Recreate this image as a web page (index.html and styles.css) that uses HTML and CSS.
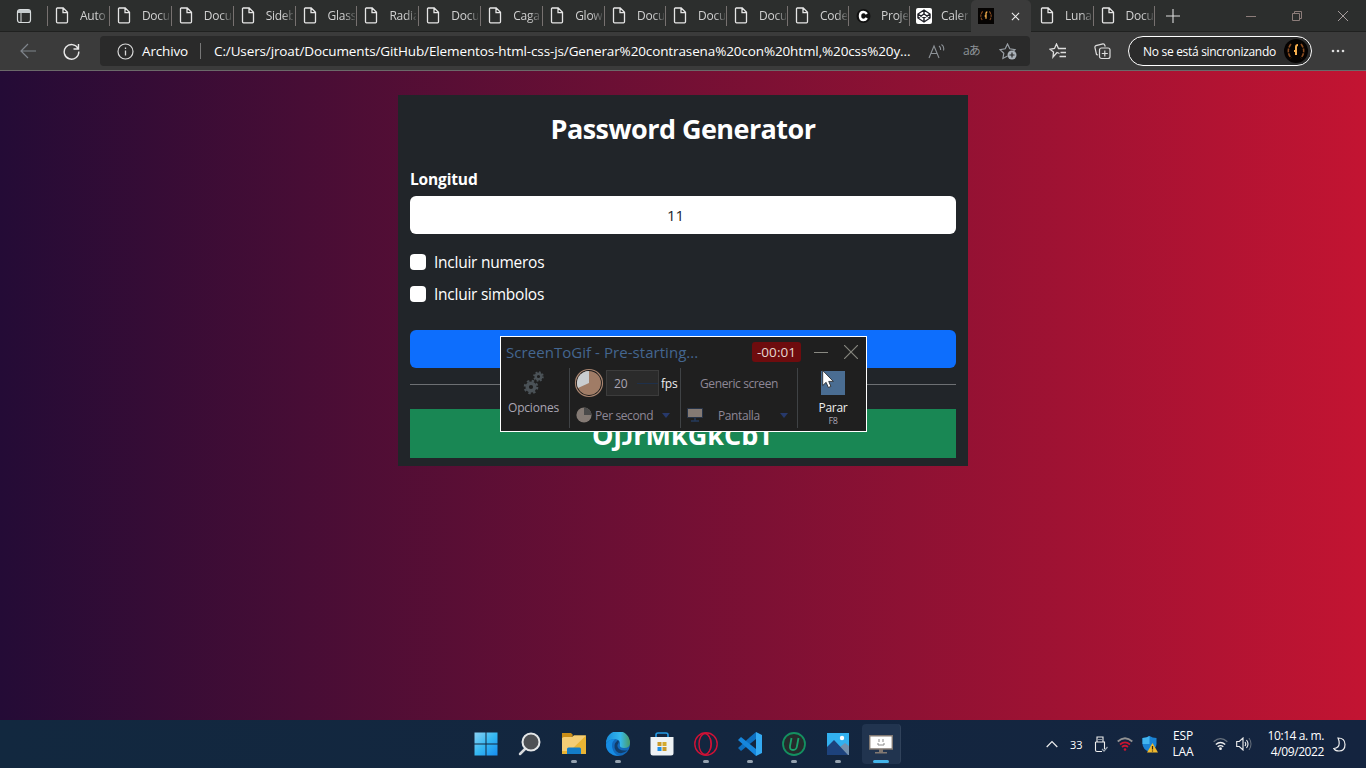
FILE: index.html
```html
<!DOCTYPE html>
<html lang="es">
<head>
<meta charset="utf-8">
<title>Password Generator</title>
<link rel="stylesheet" href="styles.css">
</head>
<body>
<svg class="defs" aria-hidden="true">
  <symbol id="doc" viewBox="0 0 14 17"><path d="M1.800 1h6.400l4.300 4.300v9.500q0 1-1 1H2.500q-1 0-1-1V1.800q0-.8.8-.8zM8 1v4.600h4.500" fill="none" stroke="#e6e6e6" stroke-width="1.300"/></symbol>
  <symbol id="emblem" viewBox="0 0 24 24"><rect width="24" height="24" fill="#050302"/><g fill="none" stroke="#8c4d20" stroke-width="1.600"><path d="M7 5Q1.500 12 7 19M17 5q5.500 7 0 14" stroke-dasharray="4 1"/><path d="M12 16V8q0-2 2-2M10 12H12" stroke="#f5ae4c" stroke-width="2"/></g></symbol>
</svg>
<div class="desktop">
  <header class="tabs">
    <div class="workspace"><svg width="16" height="16" viewBox="0 0 16 16"><rect x="1.500" y="1.500" width="13" height="13" rx="2.500" fill="none" stroke="#d8dcdd" stroke-width="1.200"/><path d="M2 2h12v3H2z" fill="#c5cbcd"/><path d="M5 5v9" stroke="#d8dcdd"/></svg></div>
    <div class="tab wide"><svg class="doc"><use href="#doc"/></svg><span>Auto</span></div>
    <div class="tab wide"><svg class="doc"><use href="#doc"/></svg><span>Docu</span></div>
    <div class="tab wide"><svg class="doc"><use href="#doc"/></svg><span>Docu</span></div>
    <div class="tab wide"><svg class="doc"><use href="#doc"/></svg><span>Sideb</span></div>
    <div class="tab wide"><svg class="doc"><use href="#doc"/></svg><span>Glass</span></div>
    <div class="tab wide"><svg class="doc"><use href="#doc"/></svg><span>Radia</span></div>
    <div class="tab wide"><svg class="doc"><use href="#doc"/></svg><span>Docu</span></div>
    <div class="tab wide"><svg class="doc"><use href="#doc"/></svg><span>Caga</span></div>
    <div class="tab wide"><svg class="doc"><use href="#doc"/></svg><span>Glow</span></div>
    <div class="tab"><svg class="doc"><use href="#doc"/></svg><span>Docu</span></div>
    <div class="tab"><svg class="doc"><use href="#doc"/></svg><span>Docu</span></div>
    <div class="tab"><svg class="doc"><use href="#doc"/></svg><span>Docu</span></div>
    <div class="tab"><svg class="doc"><use href="#doc"/></svg><span>Code</span></div>
    <div class="tab"><svg class="fav" viewBox="0 0 16 16"><circle cx="7.500" cy="8" r="7" fill="#111"/><path d="M10.800 6Q9.500 4 7.500 4q-3.500 0-3.500 4t3.500 4q2 0 3.300-2" fill="none" stroke="#fff" stroke-width="2.500"/></svg><span>Proje</span></div>
    <div class="tab last"><svg class="fav" viewBox="0 0 16 16"><rect width="16" height="16" rx="2" fill="#fff"/><path d="M8 2l6 4v4l-6 4-6-4V6zM2 6l6 4 6-4M2 10l6-4 6 4M8 2v4M8 10v4" fill="none" stroke="#1e1f26" stroke-width="1.400"/></svg><span>Calen</span></div>
    <div class="tab active"><svg class="fav"><use href="#emblem"/></svg><svg class="close" viewBox="0 0 10 10"><path d="M1 1l8 8M9 1L1 9" stroke="#eee" stroke-width="1.200"/></svg></div>
    <div class="tab"><svg class="doc"><use href="#doc"/></svg><span>Luna</span></div>
    <div class="tab"><svg class="doc"><use href="#doc"/></svg><span>Docu</span></div>
    <svg class="newtab" viewBox="0 0 14 14"><path d="M7 0v14M0 7h14" stroke="#dcdcdc" stroke-width="1.100"/></svg>
    <div class="winctl">
      <svg width="12" height="12"><path d="M1 6.500h10" stroke="#8d7d7a"/></svg>
      <svg width="12" height="12"><path d="M1.500 3.500h7v7h-7zM3.500 3V1.500h7v7H9" fill="none" stroke="#8d7d7a"/></svg>
      <svg width="12" height="12"><path d="M1 1l10 10M11 1L1 11" stroke="#a59c9c"/></svg>
    </div>
  </header>
  <nav class="toolbar">
    <svg class="back" viewBox="0 0 17 16"><path d="M16 8H1M8 1L1 8l7 7" fill="none" stroke="#7f858c" stroke-width="1.200"/></svg>
    <svg class="reload" viewBox="0 0 17 17"><path d="M15 5.500A7.300 7.300 0 1 0 15.800 8.500M15.500 1v5h-5" fill="none" stroke="#e8e8e8" stroke-width="1.400"/></svg>
    <div class="address">
      <svg class="info" viewBox="0 0 17 17"><circle cx="8.500" cy="8.500" r="7.500" fill="none" stroke="#d8d8d8" stroke-width="1.200"/><path d="M8.500 7.500v5M8.500 4.500v1.500" stroke="#d8d8d8" stroke-width="1.300"/></svg>
      <span class="scheme">Archivo</span>
      <span class="bar"></span>
      <span class="url">C:/Users/jroat/Documents/GitHub/Elementos-html-css-js/Generar%20contrasena%20con%20html,%20css%20y...</span>
      <svg class="read" viewBox="0 0 17 15"><path d="M1 14L6 2l5 12M3 9.500h6M11 2q2 1.500 1.500 4M13.500.5q3 2 2 6" fill="none" stroke="#8d9297" stroke-width="1.100"/></svg>
      <span class="translate">aあ</span>
      <svg class="star" viewBox="0 0 18 17"><path d="M8.500 13l-4.600 2.500.9-5.200L1 6.600l5.200-.8L8.500 1l2.300 4.800 5.200.8-2 2" fill="none" stroke="#999fa5" stroke-width="1.200"/><circle cx="13" cy="12" r="4.500" fill="#aab1b8"/><path d="M13 9.500v5M10.500 12h5" stroke="#2a2a2a" stroke-width="1.200"/></svg>
    </div>
    <svg class="favs" viewBox="0 0 18 16"><path d="M10.500 10.500L8 9.500l-4 4.500.5-5L1 6.300l4.500-.8L7.500 1l2 4.500H17M11.500 9.500H17M10.500 13.500H17" fill="none" stroke="#ddd" stroke-width="1.300"/></svg>
    <svg class="coll" viewBox="0 0 17 17"><path d="M4 12l-1.500-.5L.9 4.500q-.2-1.500 1-1.900l7-1.700q1.500-.2 2 1.600l.3 1.200" fill="none" stroke="#ddd" stroke-width="1.200"/><rect x="5.500" y="5" width="10.500" height="10.500" rx="2" fill="none" stroke="#ddd" stroke-width="1.200"/><path d="M10.800 7.500v6M7.800 10.500h6" stroke="#ddd" stroke-width="1.200"/></svg>
    <div class="profile"><span>No se está sincronizando</span><svg class="avatar"><use href="#emblem"/></svg></div>
    <svg class="dots" viewBox="0 0 14 4"><g fill="#ddd"><circle cx="2" cy="2" r="1.300"/><circle cx="7" cy="2" r="1.300"/><circle cx="12" cy="2" r="1.300"/></g></svg>
  </nav>
  <main class="page">
    <section class="card">
      <h1>Password Generator</h1>
      <div class="label">Longitud</div>
      <div class="input">11</div>
      <div class="check"><i></i><span>Incluir numeros</span></div>
      <div class="check"><i></i><span>Incluir simbolos</span></div>
      <div class="button"></div>
      <div class="rule"></div>
      <div class="result">Oj<span class="cap">J</span>rMkGkCbT</div>
    </section>
    <aside class="recorder">
      <div class="rtitle"><span>ScreenToGif - Pre-starting...</span><b>-00:01</b>
        <svg width="14" height="14" viewBox="0 0 14 14"><path d="M0 7.500h14" stroke="#898982"/></svg>
        <svg width="14" height="14" viewBox="0 0 14 14"><path d="M0 0l14 14M14 0L0 14" stroke="#85857e" stroke-width="1.200"/></svg></div>
      <div class="rbody">
        <div class="opt">
          <svg width="22" height="24" viewBox="0 0 22 24"><g fill="none" stroke="#4b5257"><circle cx="8" cy="16" r="3.800" stroke-width="3.400"/><circle cx="8" cy="16" r="6.200" stroke-width="2.200" stroke-dasharray="2.435 2.435"/><circle cx="15.500" cy="5.500" r="2.800" stroke-width="2.400"/><circle cx="15.500" cy="5.500" r="4.400" stroke-width="1.800" stroke-dasharray="1.728 1.728"/></g></svg>
          <span>Opciones</span>
        </div>
        <div class="rate">
          <div class="row r1"><svg width="30" height="30" viewBox="0 0 30 30"><circle cx="15" cy="15" r="13.500" fill="#181818" stroke="#a98570" stroke-width="1.200"/><circle cx="15" cy="15" r="12" fill="#a07c66"/><path d="M15 15V3A12 12 0 0 0 4 20z" fill="#c9cdd0"/></svg><span class="num">20<em></em></span><span class="fps">fps</span></div>
          <div class="row r2"><svg width="16" height="16" viewBox="0 0 16 16"><circle cx="8" cy="8" r="7.600" fill="#847a74"/><path d="M8 8V.4A7.600 7.600 0 0 1 15.600 8z" fill="#4a4a4a"/></svg><span class="ps">Per second</span><svg class="arrow" width="8" height="5"><path d="M0 0h8L4 5z" fill="#27396b"/></svg></div>
        </div>
        <div class="screen">
          <div class="row r1"><span>Generic screen</span></div>
          <div class="row r2"><svg width="16" height="14" viewBox="0 0 16 14"><path d="M.5.500h15v9H.5z" fill="#847a74" stroke="#263347"/><path d="M8 10v3M4 13h8" stroke="#263b5c" stroke-width="1.500"/></svg><span class="pan">Pantalla</span><svg class="arrow" width="8" height="5"><path d="M0 0h8L4 5z" fill="#27396b"/></svg></div>
        </div>
        <div class="stop"><i></i><span>Parar</span><small>F8</small></div>
      </div>
      <svg class="cursor" viewBox="0 0 12 19"><path d="M.7 1v15l3.400-3.200L6.400 18l2.500-1.100-2.200-5h4.600z" fill="#fff" stroke="#222" stroke-width=".8"/></svg>
    </aside>
  </main>
  <footer class="taskbar">
    <div class="apps">
      <div class="app"><svg viewBox="0 0 24 24"><defs><linearGradient id="w" x2="1" y2="1"><stop stop-color="#8ad0f2"/><stop offset=".5" stop-color="#35b8f2"/><stop offset="1" stop-color="#168cf0"/></linearGradient></defs><path d="M.5.500H11.500V11.500H.5zM12.500.500h11v11h-11zM.5 12.500h11v11H.5zM12.500 12.500h11v11h-11z" fill="url(#w)"/></svg></div>
      <div class="app"><svg viewBox="0 0 24 24"><path d="M8 16l-6 6" stroke="#d6d9dc" stroke-width="2.500" stroke-linecap="round"/><circle cx="13" cy="10" r="8.500" fill="#4d5054" stroke="#e4e7e8" stroke-width="2"/></svg></div>
      <div class="app run"><svg viewBox="0 0 24 24"><path d="M0 1h9l2 2-2 3H0z" fill="#c98d17"/><path d="M0 6l2-1h8l2-1.500h12V22H0z" fill="#e9b434"/><path d="M0 6l2-1h8l2-1.500h12L8 19H0z" fill="#f4cd75"/><path d="M5 22v-5q0-1.500 1.500-1.500h11q1.500 0 1.500 1.500v5z" fill="#137dc8"/></svg></div>
      <div class="app run"><svg viewBox="0 0 24 24"><defs><linearGradient id="e" x2="1"><stop stop-color="#168bdb"/><stop offset=".6" stop-color="#35b8ec"/><stop offset="1" stop-color="#4c9b63"/></linearGradient></defs><circle cx="12" cy="12" r="12" fill="#1269bb"/><path d="M0 11A12 12 0 0 1 24 11q0 5-6 5-5 0-4-4 .5-4-5-5-5 0-9 4z" fill="url(#e)"/><path d="M12 8q-6 5-2 11 5 5 12-1-5 1.500-9-1-3-3-.5-6 1-1.500-.5-3z" fill="#123e6b"/><path d="M0 12q3-5 9-5-5 5-2 11 1.500 4 6 6Q0 23 0 12z" fill="#168ce3"/></svg></div>
      <div class="app"><svg viewBox="0 0 24 24"><path d="M6 6V3q0-2 2-2h8q2 0 2 2v3" fill="none" stroke="#249ae5" stroke-width="1.600"/><path d="M.5 5h23v16q0 2.500-2.500 2.500H3Q.5 23.500.5 21z" fill="#eef2f5"/><path d="M7.500 10h4v4h-4zM12.500 15h4v4h-4z" fill="#c9992a"/><path d="M12.500 10h4v4h-4z" fill="#d5aa2e"/><path d="M7.500 15h4v4h-4z" fill="#1d8fe8"/></svg></div>
      <div class="app run"><svg viewBox="0 0 24 24"><g fill="none" stroke="#d01236" stroke-width="1.400"><circle cx="12" cy="12" r="11.200"/><ellipse cx="11" cy="12" rx="6" ry="10.500"/><path d="M14.500 4q3 2 3 8t-3 8" stroke-width="1"/></g></svg></div>
      <div class="app run"><svg viewBox="0 0 24 24"><path d="M18 0l-6 5L0 16l3 3L18 7z" fill="#0d6fc0"/><path d="M18 24L0 8l3-3 15 12z" fill="#1686dc"/><path d="M18 0l6 3v18l-6 3z" fill="#34aaf2"/></svg></div>
      <div class="app run"><svg viewBox="0 0 24 24"><circle cx="12" cy="12" r="11" fill="#252b2c" stroke="#149061" stroke-width="1.800"/><path d="M9.500 6L8 14q-.5 4 3 4t4-4l1.500-8" fill="none" stroke="#19a26b" stroke-width="1.800"/></svg></div>
      <div class="app run"><svg viewBox="0 0 24 24"><path d="M1 1h22v22H1z" fill="#32b0ef"/><path d="M14 15l5-4 4 3v9H14z" fill="#7390ad"/><path d="M1 15l7-7 14 15H1z" fill="#1d427c"/><circle cx="16" cy="6" r="2.200" fill="#fff"/></svg></div>
      <div class="app run current"><svg viewBox="0 0 24 24"><path d="M.7 3.700h22.600v13.300H.7z" fill="#fff" stroke="#817872" stroke-width="1.400"/><path d="M10 17h4v3h4v1.500H6V20h4z" fill="#817872"/><path d="M10 7v3M14 7v3M9 11v2h6v-2" fill="none" stroke="#8a8a8a"/></svg></div>
    </div>
    <div class="tray">
      <svg class="up" viewBox="0 0 12 8"><path d="M.7 7L6 1.500 11.300 7" fill="none" stroke="#eee" stroke-width="1.200"/></svg>
      <span class="temp">33</span>
      <svg class="usb" viewBox="0 0 14 17"><path d="M3 6V1h6v5M1.500 6h9v7M1.500 6v8q0 1.500 1.500 1.500h5M5 3v1M7 3v1" fill="none" stroke="#eee" stroke-width="1.100"/><path d="M8 13l2 2 3.500-4" fill="none" stroke="#9aa5b0" stroke-width="1.200"/></svg>
      <svg class="rwifi" viewBox="0 0 16 14"><g fill="none" stroke-width="1.700"><path d="M.7 4.500q7.300-6.500 14.600 0" stroke="#929293"/><path d="M3 7.500q5-4.200 10 0M5 10q3-2.500 6 0" stroke="#ca1531"/></g><circle cx="8" cy="12.500" r="1.300" fill="#ca1531"/></svg>
      <svg class="shield" viewBox="0 0 16 17"><path d="M7.500 0q3 2 7 2v6q0 5-7 8-7-3-7-8V2q4 0 7-2z" fill="#1b83d4"/><path d="M7.500 0v8H.5V2q4 0 7-2z" fill="#42b5f0"/><path d="M10.500 7l5.500 9.500H5z" fill="#f0b92f"/><path d="M10.500 10v3.500M10.500 14.500v1" stroke="#33250a" stroke-width="1.200"/></svg>
      <div class="lang">ESP<br>LAA</div>
      <svg class="wifi" viewBox="0 0 16 14"><g fill="none" stroke="#eee" stroke-width="1.500"><path d="M.7 4.500q7.300-6.500 14.600 0" stroke="#68727e"/><path d="M3 7.500q5-4.200 10 0M5 10q3-2.500 6 0"/></g><circle cx="8" cy="12" r="1.500" fill="#eee"/></svg>
      <svg class="vol" viewBox="0 0 16 14"><path d="M.7 4.500h2.600L7 1v12L3.300 9.500H.7zM9 5q1.500 2 0 4M10.500 3q3 4 0 8" fill="none" stroke="#eee" stroke-width="1.100"/><path d="M13 1q4 6 0 12" fill="none" stroke="#68727e"/></svg>
      <div class="clock">10:14 a. m.<br>4/09/2022</div>
      <svg class="moon" viewBox="0 0 13 15"><path d="M5 1q7 0 7 6.500T6 14Q2 14 .8 11.500 6 11 6.200 6.500 6.200 3.500 5 1z" fill="none" stroke="#eee" stroke-width="1.200"/></svg>
    </div>
  </footer>
</div>
</body>
</html>
```
FILE: styles.css
```css
* { box-sizing: border-box; }
body { margin: 0; font-family: "Open Sans", "Noto Sans", sans-serif; color: #fff; }
svg { display: block; flex: none; }
span { white-space: nowrap; }
.defs { position: absolute; width: 0; height: 0; }
.desktop { width: 1366px; height: 768px; display: flex; flex-direction: column; overflow: hidden; }

.tabs { height: 32px; background: #2c2e2d; display: flex; align-items: center; flex: none; border-bottom: 1px solid #202120; }
.workspace { width: 48px; height: 20px; padding: 2px 0 0 16px; border-right: 1px solid #777170; }
.tab { width: 61px; height: 20px; padding-left: 7px; border-right: 1px solid #777170; display: flex; align-items: center; flex: none; }
.wide { width: 61.900px; }
.tab span { width: 27px; margin-left: 11px; overflow: hidden; font-size: 12px; letter-spacing: -.25px; line-height: 18px; color: #d0d0d0; -webkit-mask-image: linear-gradient(90deg, #000 60%, #0003); mask-image: linear-gradient(90deg, #000 60%, #0003); }
.doc { width: 14px; height: 17px; }
.fav { width: 16px; height: 16px; }
.tab .fav + span { margin-left: 9px; }
.last { border-right-color: transparent; padding-left: 6px; }
.active { width: 60px; height: 32px; margin-bottom: -1px; background: #3b3b3b; border: 0; border-radius: 5px 5px 0 0; }
.active + .tab { width: 62.500px; padding-left: 9px; }
.close { width: 9px; height: 9px; margin-left: 17px; }
.newtab { width: 14px; height: 14px; margin-left: 11px; }
.winctl { display: flex; gap: 34px; margin-left: auto; padding-right: 17px; }

.toolbar { height: 39px; background: #3b3b3b; border-bottom: 1px solid #6b6969; display: flex; align-items: center; flex: none; padding-left: 20px; }
.back { width: 17px; height: 16px; }
.reload { width: 17px; height: 17px; margin-left: 26px; }
.address { width: 930px; height: 30px; margin-left: 20px; background: #2a2a2a; border-radius: 4px; display: flex; align-items: center; padding-left: 17px; }
.info { width: 17px; height: 17px; }
.scheme { width: 58px; margin-left: 8px; font-size: 13.500px; letter-spacing: -.15px; }
.bar { width: 1px; height: 16px; background: #777; }
.url { width: 702px; margin-left: 13px; font-size: 13.500px; letter-spacing: -.12px; }
.read { width: 17px; height: 15px; margin-left: 12px; }
.translate { width: 20px; margin-left: 18px; font-family: "Open Sans", "Noto Sans CJK JP", sans-serif; font-size: 12px; letter-spacing: -1px; line-height: 20px; color: #8d9297; }
.star { width: 18px; height: 17px; margin-left: 16px; }
.favs { width: 18px; height: 16px; margin-left: 19px; }
.coll { width: 17px; height: 17px; margin-left: 27px; }
.profile { width: 184px; height: 30px; margin-left: 17px; border: 1px solid #fff; border-radius: 15px; background: #2b2b2b; display: flex; align-items: center; justify-content: space-between; padding: 0 3px 0 14px; font-size: 12px; letter-spacing: -.3px; }
.avatar { width: 24px; height: 24px; border-radius: 50%; }
.dots { width: 14px; height: 4px; margin-left: 19px; }

.page { height: 649px; flex: none; background: linear-gradient(90deg, #240b36, #c31432); position: relative; padding-top: 24px; }
.card { width: 570px; height: 371px; margin-left: 398px; padding: 17px 12px 0; background: #212529; }
h1 { margin: 0; font-size: 27px; line-height: 34px; letter-spacing: -.55px; text-align: center; }
.label { margin-top: 21px; font-size: 15.500px; line-height: 24px; font-weight: 700; letter-spacing: -.15px; }
.input { height: 38px; margin-top: 5px; border-radius: 6px; background: #fff; color: #212529; text-align: center; font-size: 15px; line-height: 38px; padding-right: 15px; }
.check { height: 16px; margin-top: 16px; display: flex; align-items: center; font-size: 15.500px; letter-spacing: -.25px; }
.input + .check { margin-top: 20px; }
.check i { width: 16px; height: 16px; margin-right: 8px; border-radius: 4px; background: #fff; }
.button { height: 38px; margin-top: 28px; border-radius: 6px; background: #0d6efd; }
.rule { height: 1px; margin: 16px 0 24px; background: #6d7073; }
.result { height: 49px; background: #198754; text-align: center; font-size: 27px; font-weight: 700; line-height: 51px; }
.cap { font-family: Lato, sans-serif; line-height: 1; }

.recorder { position: absolute; left: 500px; top: 265px; width: 367px; height: 96px; border: 1px solid #fff; background: #1f1f1f; color: #aaa5b3; font-size: 12px; }
.rtitle { height: 30px; display: flex; align-items: center; padding: 0 8px 0 5px; font-size: 15px; color: #446690; letter-spacing: .05px; }
.rtitle span { width: 246px; }
.rtitle b { width: 49px; height: 20px; margin-right: 13px; background: #6e0c0e; border-radius: 3px; color: #e5d7d0; font-size: 13.500px; font-weight: 400; line-height: 20px; text-align: center; }
.rtitle svg + svg { margin-left: 16px; }
.rbody { height: 60px; margin-top: 1px; display: grid; grid-template-columns: 69px 111px 117px 1fr; }
.rbody > div { border-right: 1px solid #3f4245; }
.rbody > .stop { border: 0; }
.opt { display: flex; flex-direction: column; align-items: center; padding: 3px 3px 0 0; letter-spacing: -.2px; }
.opt span { margin-top: 5px; line-height: 16px; }
.row { display: flex; align-items: center; }
.r1 { height: 30px; }
.r2 { height: 16px; margin-top: 9px; color: #8e8796; }
.rate { padding-left: 4px; }
.num { width: 53px; height: 26px; margin-left: 2px; padding-left: 7px; background: #2b2b2b; border: 1px solid #3c3c3c; display: flex; align-items: center; gap: 9px; }
.num em { width: 21px; height: 1px; background: #1e304b; }
.fps { margin-left: 2px; color: #eee; letter-spacing: -.2px; }
.rate .r2 { padding-left: 2px; }
.ps { width: 58px; margin-left: 3px; letter-spacing: -.4px; }
.arrow { margin-left: 9px; }
.screen .r1 { justify-content: center; color: #8e8796; letter-spacing: -.4px; }
.screen .r2 { padding-left: 6px; }
.pan { width: 43px; margin-left: 15px; letter-spacing: -.4px; }
.screen .arrow { margin-left: 19px; }
.stop { display: flex; flex-direction: column; align-items: center; padding: 3px 0 0 2px; letter-spacing: -.3px; }
.stop i { width: 24px; height: 24px; background: #4a6d92; }
.stop span { margin-top: 4px; color: #eee; line-height: 17px; }
.stop small { font-size: 9px; line-height: 9px; }
.cursor { position: absolute; left: 321px; top: 32px; width: 12px; height: 20px; }

.taskbar { height: 48px; flex: none; background: linear-gradient(90deg, #12283f, #14243f); display: flex; justify-content: space-between; }
.apps { display: flex; padding-left: 464px; }
.app { width: 44px; height: 48px; padding-top: 12px; display: flex; flex-direction: column; align-items: center; flex: none; }
.app svg { width: 24px; height: 24px; }
.run::after { content: ""; width: 6px; height: 3px; margin-top: 4px; border-radius: 2px; background: #95a2b0; }
.current { background: #21344f; width: 39px; height: 40px; margin: 4px 0 0 2px; padding-top: 8px; border-radius: 4px; border-right: 1px solid #30425b; }
.current::after { width: 16px; background: #43b4ea; }
.tray { display: flex; align-items: center; padding-right: 20px; font-size: 12px; }
.up { width: 12px; height: 8px; }
.temp { width: 13px; margin-left: 12px; font-size: 11px; }
.usb { width: 14px; height: 17px; margin-left: 11px; }
.rwifi { width: 16px; height: 14px; margin-left: 9px; }
.shield { width: 16px; height: 17px; margin-left: 9px; }
.lang { width: 24px; margin-left: 13px; line-height: 16px; text-align: center; letter-spacing: -.1px; }
.wifi { width: 15px; height: 14px; margin-left: 18px; }
.vol { width: 16px; height: 14px; margin-left: 8px; }
.clock { width: 58px; margin-left: 14px; line-height: 16px; text-align: right; letter-spacing: -.4px; white-space: nowrap; }
.moon { width: 13px; height: 15px; margin-left: 9px; }
```
